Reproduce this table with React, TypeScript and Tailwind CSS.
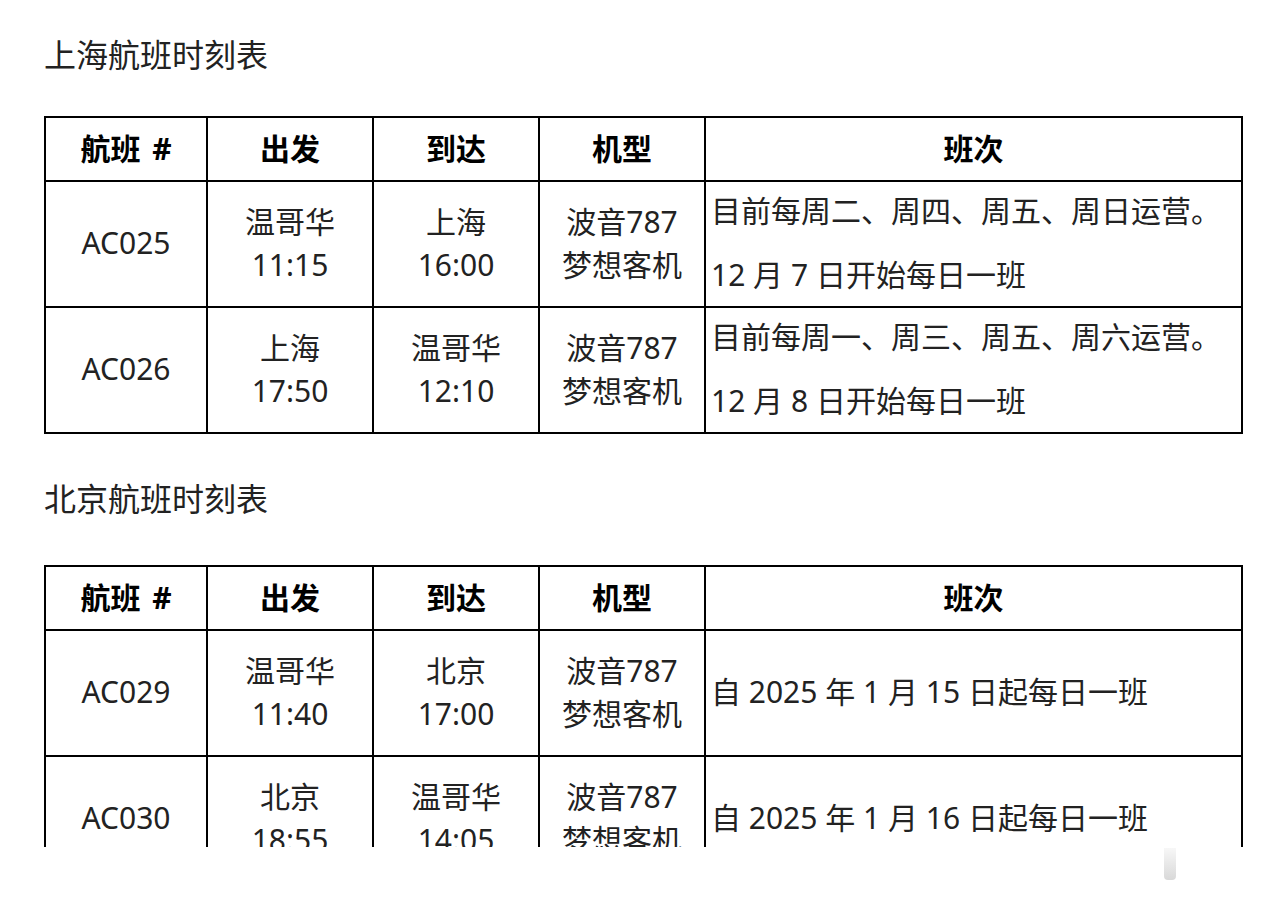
import React from "react";

type Row = {
  id: string;
  dep: [string, string];
  arr: [string, string];
  note: string[];
};

const shanghai: Row[] = [
  { id: "AC025", dep: ["温哥华", "11:15"], arr: ["上海", "16:00"], note: ["目前每周二、周四、周五、周日运营。", "12 月 7 日开始每日一班"] },
  { id: "AC026", dep: ["上海", "17:50"], arr: ["温哥华", "12:10"], note: ["目前每周一、周三、周五、周六运营。", "12 月 8 日开始每日一班"] },
];

const beijing: Row[] = [
  { id: "AC029", dep: ["温哥华", "11:40"], arr: ["北京", "17:00"], note: ["自 2025 年 1 月 15 日起每日一班"] },
  { id: "AC030", dep: ["北京", "18:55"], arr: ["温哥华", "14:05"], note: ["自 2025 年 1 月 16 日起每日一班"] },
];

function Two({ a, b }: { a: string; b: string }) {
  return (
    <div className="flex flex-col items-center leading-[43px] -mt-[3px]">
      <span>{a}</span>
      <span>{b}</span>
    </div>
  );
}

function Table({ rows }: { rows: Row[] }) {
  const th = "border-[2px] border-black font-bold text-black text-center align-middle";
  const td = "border-[2px] border-black text-center align-middle";
  return (
    <table className="table-fixed border-collapse w-[1197px] text-[30px] text-[#222222]">
      <colgroup>
        <col className="w-[162px]" />
        <col className="w-[166px]" />
        <col className="w-[166px]" />
        <col className="w-[166px]" />
        <col className="w-[537px]" />
      </colgroup>
      <thead>
        <tr className="h-[64px]">
          <th className={th}>
            <span className="-mt-[2px] block">航班 <span className="ml-[4px]">#</span></span>
          </th>
          <th className={th}><span className="-mt-[2px] block">出发</span></th>
          <th className={th}><span className="-mt-[2px] block">到达</span></th>
          <th className={th}><span className="-mt-[2px] block">机型</span></th>
          <th className={th}><span className="-mt-[2px] block">班次</span></th>
        </tr>
      </thead>
      <tbody>
        {rows.map((r) => (
          <tr key={r.id} className="h-[126px]">
            <td className={td}><span className="-mt-[3px] block">{r.id}</span></td>
            <td className={td}><Two a={r.dep[0]} b={r.dep[1]} /></td>
            <td className={td}><Two a={r.arr[0]} b={r.arr[1]} /></td>
            <td className={td}><Two a="波音787" b="梦想客机" /></td>
            <td className="border-[2px] border-black text-left align-middle pl-[5px]">
              <div className="flex flex-col gap-[21px] leading-[43px] whitespace-nowrap -mt-[3px]">
                {r.note.map((n) => (
                  <span key={n}>{n}</span>
                ))}
              </div>
            </td>
          </tr>
        ))}
      </tbody>
    </table>
  );
}

export default function App() {
  return (
    <div className="relative w-[1280px] h-[901px] overflow-hidden bg-white text-[#222222] font-['Noto_Sans','Noto_Sans_CJK_SC',sans-serif]">
      <div className="pl-[44px] pt-[34px]">
        <h2 className="text-[32px] leading-[42px] font-normal">上海航班时刻表</h2>
        <div className="mt-[40px]">
          <Table rows={shanghai} />
        </div>
        <h2 className="mt-[44px] text-[32px] leading-[42px] font-normal">北京航班时刻表</h2>
        <div className="mt-[45px] h-[282px] overflow-hidden">
          <Table rows={beijing} />
        </div>
      </div>
      <div className="absolute left-[1164px] top-[848px] w-[12px] h-[32px] rounded-b-[4px] bg-gradient-to-b from-[#f4f4f4] to-[#c8c8c8] opacity-70" />
    </div>
  );
}
